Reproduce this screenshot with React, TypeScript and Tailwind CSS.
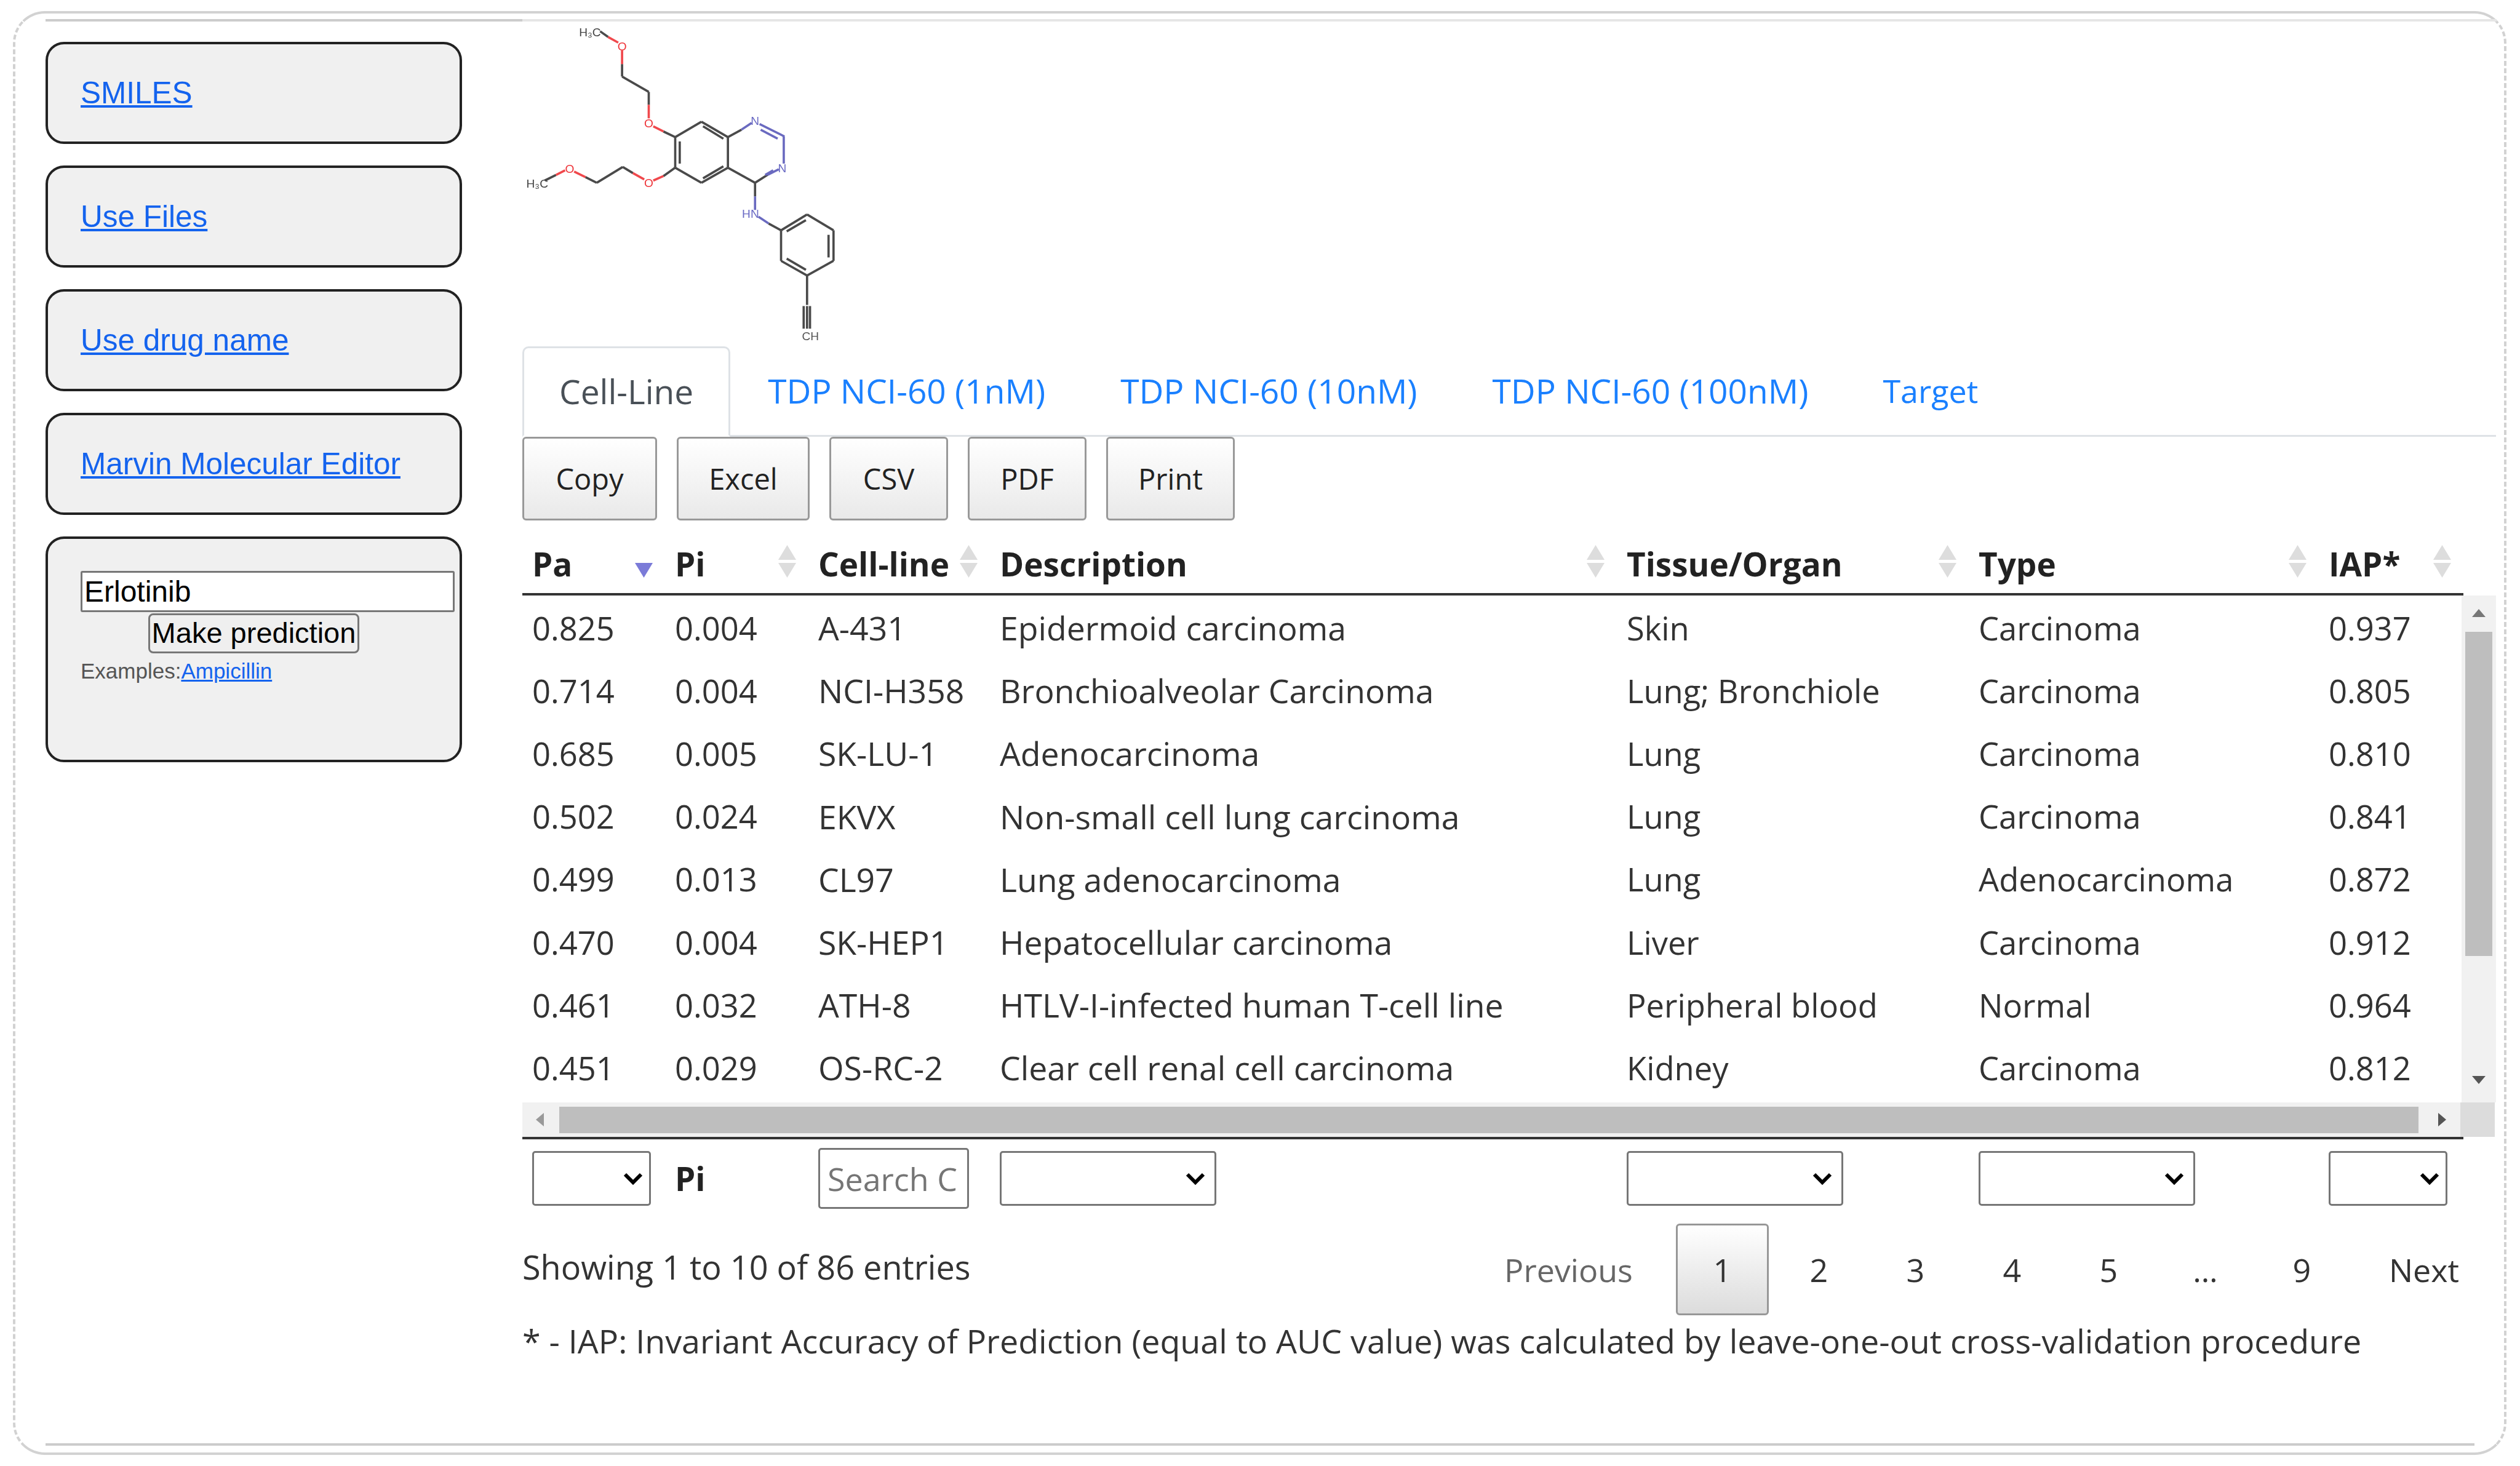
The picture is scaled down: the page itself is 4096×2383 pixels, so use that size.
import React from "react";

const cols = "grid-cols-[232px_233px_295px_1019px_572px_569px_235px]";

const rows = [
  ["0.825", "0.004", "A-431", "Epidermoid carcinoma", "Skin", "Carcinoma", "0.937"],
  ["0.714", "0.004", "NCI-H358", "Bronchioalveolar Carcinoma", "Lung; Bronchiole", "Carcinoma", "0.805"],
  ["0.685", "0.005", "SK-LU-1", "Adenocarcinoma", "Lung", "Carcinoma", "0.810"],
  ["0.502", "0.024", "EKVX", "Non-small cell lung carcinoma", "Lung", "Carcinoma", "0.841"],
  ["0.499", "0.013", "CL97", "Lung adenocarcinoma", "Lung", "Adenocarcinoma", "0.872"],
  ["0.470", "0.004", "SK-HEP1", "Hepatocellular carcinoma", "Liver", "Carcinoma", "0.912"],
  ["0.461", "0.032", "ATH-8", "HTLV-I-infected human T-cell line", "Peripheral blood", "Normal", "0.964"],
  ["0.451", "0.029", "OS-RC-2", "Clear cell renal cell carcinoma", "Kidney", "Carcinoma", "0.812"],
];

const dark: number[][] = [
  [410, 135, 445, 160],
  [507, 280, 507, 335],
  [507, 335, 625, 403],
  [625, 403, 625, 460],
  [690, 578, 742, 603],
  [742, 603, 858, 535],
  [858, 535, 975, 603],
  [975, 603, 975, 738],
  [975, 738, 858, 805],
  [858, 805, 742, 738],
  [742, 738, 742, 603],
  [762, 622, 762, 720],
  [865, 555, 955, 610],
  [865, 785, 955, 732],
  [975, 603, 1035, 570],
  [975, 738, 1095, 805],
  [1095, 805, 1150, 770],
  [1095, 805, 1095, 865],
  [1155, 985, 1210, 1015],
  [1210, 1015, 1325, 945],
  [1325, 945, 1442, 1015],
  [1442, 1015, 1442, 1150],
  [1442, 1150, 1325, 1215],
  [1325, 1215, 1210, 1150],
  [1210, 1150, 1210, 1015],
  [1235, 1020, 1320, 970],
  [1420, 1035, 1420, 1135],
  [1235, 1140, 1320, 1190],
  [1325, 1215, 1325, 1345],
  [1310, 1350, 1310, 1450],
  [1325, 1350, 1325, 1450],
  [1338, 1350, 1338, 1450],
  [165, 795, 215, 770],
  [345, 780, 395, 805],
  [395, 805, 510, 735],
  [510, 735, 555, 762],
  [690, 775, 742, 738],
];

const red: number[][] = [
  [445, 160, 490, 185],
  [507, 220, 507, 280],
  [625, 460, 625, 520],
  [645, 555, 690, 578],
  [215, 770, 255, 750],
  [295, 755, 345, 780],
  [555, 762, 605, 790],
  [645, 795, 690, 775],
];

const blue: number[][] = [
  [1035, 570, 1080, 540],
  [1115, 545, 1225, 600],
  [1120, 570, 1195, 610],
  [1222, 600, 1222, 720],
  [1150, 770, 1200, 745],
  [1140, 770, 1175, 750],
  [1095, 865, 1095, 925],
  [1110, 955, 1155, 985],
];

const Molecule = () => (
  <svg viewBox="66 100 1450 1420" className="mt-[3px] h-[522px] w-[533px] blur-[0.5px]">
    {dark.map((l, i) => (
      <line key={i} x1={l[0]} y1={l[1]} x2={l[2]} y2={l[3]} stroke="#4a4a4a" strokeWidth="10" />
    ))}
    {red.map((l, i) => (
      <line key={i} x1={l[0]} y1={l[1]} x2={l[2]} y2={l[3]} stroke="#f0484c" strokeWidth="10" />
    ))}
    {blue.map((l, i) => (
      <line key={i} x1={l[0]} y1={l[1]} x2={l[2]} y2={l[3]} stroke="#6a6ac0" strokeWidth="10" />
    ))}
    <g fontFamily="Liberation Sans, sans-serif" fontSize="52" textAnchor="middle">
      <text x="365" y="157" fill="#444">H₃C</text>
      <text x="132" y="827" fill="#444">H₃C</text>
      <text x="507" y="219" fill="#ee3338">O</text>
      <text x="625" y="560" fill="#ee3338">O</text>
      <text x="275" y="760" fill="#ee3338">O</text>
      <text x="625" y="824" fill="#ee3338">O</text>
      <text x="1095" y="550" fill="#6a6ac4">N</text>
      <text x="1215" y="759" fill="#6a6ac4">N</text>
      <text x="1075" y="960" fill="#6a6ac4">HN</text>
      <text x="1340" y="1500" fill="#555">CH</text>
    </g>
  </svg>
);

const SideLink = ({ label }: { label: string }) => (
  <div className="flex h-[166px] w-[677px] items-center rounded-[30px] border-4 border-[#222] bg-[#f0f0f0] pl-[53px] text-[49.5px]">
    <a href="#" className="text-[#1463ee] underline">
      {label}
    </a>
  </div>
);

const Triangle = ({ dir, color, w, h }: { dir: "up" | "down" | "left" | "right"; color: string; w: number; h: number }) => {
  const pts = {
    up: "50,0 100,100 0,100",
    down: "0,0 100,0 50,100",
    left: "100,0 100,100 0,50",
    right: "0,0 100,50 0,100",
  }[dir];
  return (
    <svg viewBox="0 0 100 100" preserveAspectRatio="none" width={w} height={h} className="block shrink-0">
      <polygon points={pts} fill={color} />
    </svg>
  );
};

const SortArrows = ({ active }: { active?: boolean }) => (
  <div className="absolute right-[20px] top-[4px] flex flex-col gap-[5px]">
    <Triangle dir="up" color={active ? "#ffffff" : "#dddddd"} w={29} h={24} />
    <Triangle dir="down" color={active ? "#7b7bd8" : "#dddddd"} w={29} h={24} />
  </div>
);

const HeadCell = ({ label, active }: { label: string; active?: boolean }) => (
  <div className="relative pl-[16px] text-[53px] leading-[70px] font-bold text-[#222]">
    {label}
    <SortArrows active={active} />
  </div>
);

const Chevron = () => (
  <svg viewBox="0 0 32 20" className="h-[20px] w-[32px]" fill="none" stroke="#000" strokeWidth="6">
    <polyline points="3,3 16,16 29,3" />
  </svg>
);

const FilterSelect = ({ wide }: { wide?: boolean }) => (
  <div className="pl-[16px]">
    <div
      className={`flex h-[89px] items-center justify-end rounded-[5px] border-[3px] border-[#767676] bg-white ${
        wide ? "w-[352px] pr-[15px]" : "w-[193px] pr-[10px]"
      }`}
    >
      <Chevron />
    </div>
  </div>
);

const tabs = ["TDP NCI-60 (1nM)", "TDP NCI-60 (10nM)", "TDP NCI-60 (100nM)"];
const buttons = [
  { label: "Copy", width: "w-[219px]" },
  { label: "Excel", width: "w-[216px]" },
  { label: "CSV", width: "w-[193px]" },
  { label: "PDF", width: "w-[193px]" },
  { label: "Print", width: "w-[209px]" },
];
const pages = ["2", "3", "4", "5", "…", "9"];

export default function App() {
  return (
    <div className="h-[2383px] w-[4096px] overflow-hidden bg-white pl-[21px] pr-[22px] pt-[18px]">
      <div className="flex h-[2347px] flex-col rounded-[52px] border-4 border-[#d2d2d2] pl-[49px] pr-[12px] [border-left-style:dashed] [border-right-style:dashed]">
        {/* second rule under the frame top */}
        <div className="mt-[9px] flex h-[4px] shrink-0">
          <div className="w-[775px] bg-[#cccccc]" />
          <div className="flex-1 bg-[#e6e6e6]" />
        </div>

        <div className="flex min-h-0 flex-1 gap-[98px]">
          {/* Sidebar */}
          <div className="mt-[33px] flex w-[677px] shrink-0 flex-col gap-[35px] font-['Liberation_Sans',sans-serif]">
            <SideLink label="SMILES" />
            <SideLink label="Use Files" />
            <SideLink label="Use drug name" />
            <SideLink label="Marvin Molecular Editor" />
            <div className="h-[367px] w-[677px] rounded-[30px] border-4 border-[#222] bg-[#f0f0f0] pl-[53px] pt-[52px]">
              <div className="flex h-[67px] w-[608px] items-center rounded-[3px] border-[3px] border-[#777] bg-white pl-[3px] text-[48px] text-black">
                Erlotinib
              </div>
              <div className="ml-[110px] mt-[2px] flex h-[65px] w-[343px] items-center justify-center whitespace-nowrap rounded-[8px] border-[3px] border-[#777] bg-[#efefef] text-[47px] text-black">
                Make prediction
              </div>
              <div className="mt-[9px] text-[35px] leading-[40px] text-[#555]">
                Examples:
                <a href="#" className="text-[#1463ee] underline">
                  Ampicillin
                </a>
              </div>
            </div>
          </div>

          {/* Main column */}
          <div className="flex w-[3208px] flex-col font-['Open_Sans',sans-serif] text-[#333]">
            <Molecule />

            {/* Tabs */}
            <div className="mt-[3px] flex h-[147px] border-b-[3px] border-[#dee2e6] text-[55px]">
              <div className="-mb-[3px] flex items-center rounded-t-[10px] border-[3px] border-[#dee2e6] border-b-white bg-white px-[57px] text-[#495057]">
                Cell-Line
              </div>
              {tabs.map((t) => (
                <a key={t} href="#" className="flex items-center px-[61px] text-[#1a80ff]">
                  {t}
                </a>
              ))}
              <a href="#" className="flex items-center px-[60px] text-[52px] text-[#1a80ff]">
                Target
              </a>
            </div>

            {/* Export buttons */}
            <div className="flex gap-[32px]">
              {buttons.map((b) => (
                <div
                  key={b.label}
                  className={`flex h-[136px] items-center justify-center rounded-[6px] border-[3px] border-[#999] bg-gradient-to-b from-white to-[#e9e9e9] text-[47px] text-[#222] ${b.width}`}
                >
                  {b.label}
                </div>
              ))}
            </div>

            {/* Table head */}
            <div className={`grid h-[122px] w-[3155px] ${cols} items-center border-b-4 border-[#333] pt-[24px]`}>
              <HeadCell label="Pa" active />
              <HeadCell label="Pi" />
              <HeadCell label="Cell-line" />
              <HeadCell label="Description" />
              <HeadCell label="Tissue/Organ" />
              <HeadCell label="Type" />
              <HeadCell label="IAP*" />
            </div>

            {/* Table body with its scrollbar */}
            <div className="flex h-[824px]">
              <div className="min-w-0 flex-1 overflow-hidden pt-[2px]">
                {rows.map((r) => (
                  <div key={r[0]} className={`grid h-[102.2px] w-[3155px] ${cols} items-center text-[52.5px] text-[#333]`}>
                    {r.map((c, i) => (
                      <div key={i} className={`whitespace-nowrap pl-[16px] ${i === 2 || i === 3 ? "text-[53.5px]" : ""}`}>
                        {c}
                      </div>
                    ))}
                  </div>
                ))}
              </div>
              <div className="flex w-[56px] shrink-0 flex-col items-center bg-[#f1f1f1] pt-[22px]">
                <Triangle dir="up" color="#777777" w={22} h={13} />
                <div className="mt-[24px] h-[527px] w-[44px] bg-[#bebebe]" />
                <div className="mt-auto mb-[30px]">
                  <Triangle dir="down" color="#555555" w={22} h={13} />
                </div>
              </div>
            </div>

            {/* Horizontal scrollbar */}
            <div className="flex h-[56px]">
              <div className="flex w-[3150px] items-center bg-[#f1f1f1]">
                <div className="ml-[22px]">
                  <Triangle dir="left" color="#999999" w={13} h={22} />
                </div>
                <div className="ml-[25px] h-[43px] w-[3022px] bg-[#bebebe]" />
                <div className="ml-[32px]">
                  <Triangle dir="right" color="#555555" w={13} h={22} />
                </div>
              </div>
              <div className="w-[56px] bg-[#dcdcdc]" />
            </div>

            {/* Table foot */}
            <div className={`grid h-[128px] w-[3155px] ${cols} items-center border-t-4 border-[#333] pt-[3px]`}>
              <FilterSelect />
              <div className="pl-[16px] text-[53px] font-bold text-[#222]">Pi</div>
              <div className="pl-[16px]">
                <input
                  placeholder="Search Cell-line"
                  className="h-[99px] w-[245px] rounded-[5px] border-[3px] border-[#767676] pl-[12px] pr-[16px] text-[52px] placeholder:text-[#757575]"
                />
              </div>
              <FilterSelect wide />
              <FilterSelect wide />
              <FilterSelect wide />
              <FilterSelect />
            </div>

            {/* Info and paging */}
            <div className="mt-[13px] flex h-[149px] items-center justify-between text-[52px]">
              <div className="pb-[8px] text-[54px]">Showing 1 to 10 of 86 entries</div>
              <div className="flex items-center gap-[6px]">
                <div className="px-[64px] text-[#666]">Previous</div>
                <div className="flex h-[149px] w-[151px] items-center justify-center rounded-[6px] border-[3px] border-[#979797] bg-gradient-to-b from-white to-[#dcdcdc]">
                  1
                </div>
                {pages.map((p) => (
                  <div key={p} className="flex h-[149px] w-[151px] items-center justify-center">
                    {p}
                  </div>
                ))}
                <div className="px-[60px]">Next</div>
              </div>
            </div>

            {/* Footnote */}
            <div className="mt-[12px] whitespace-nowrap text-[53.75px] leading-[60px]">
              * - IAP: Invariant Accuracy of Prediction (equal to AUC value) was calculated by leave-one-out cross-validation procedure
            </div>
          </div>
        </div>

        {/* closing rule above the frame bottom */}
        <div className="mb-[11px] h-[4px] w-[3948px] shrink-0 bg-[#cccccc]" />
      </div>
    </div>
  );
}
